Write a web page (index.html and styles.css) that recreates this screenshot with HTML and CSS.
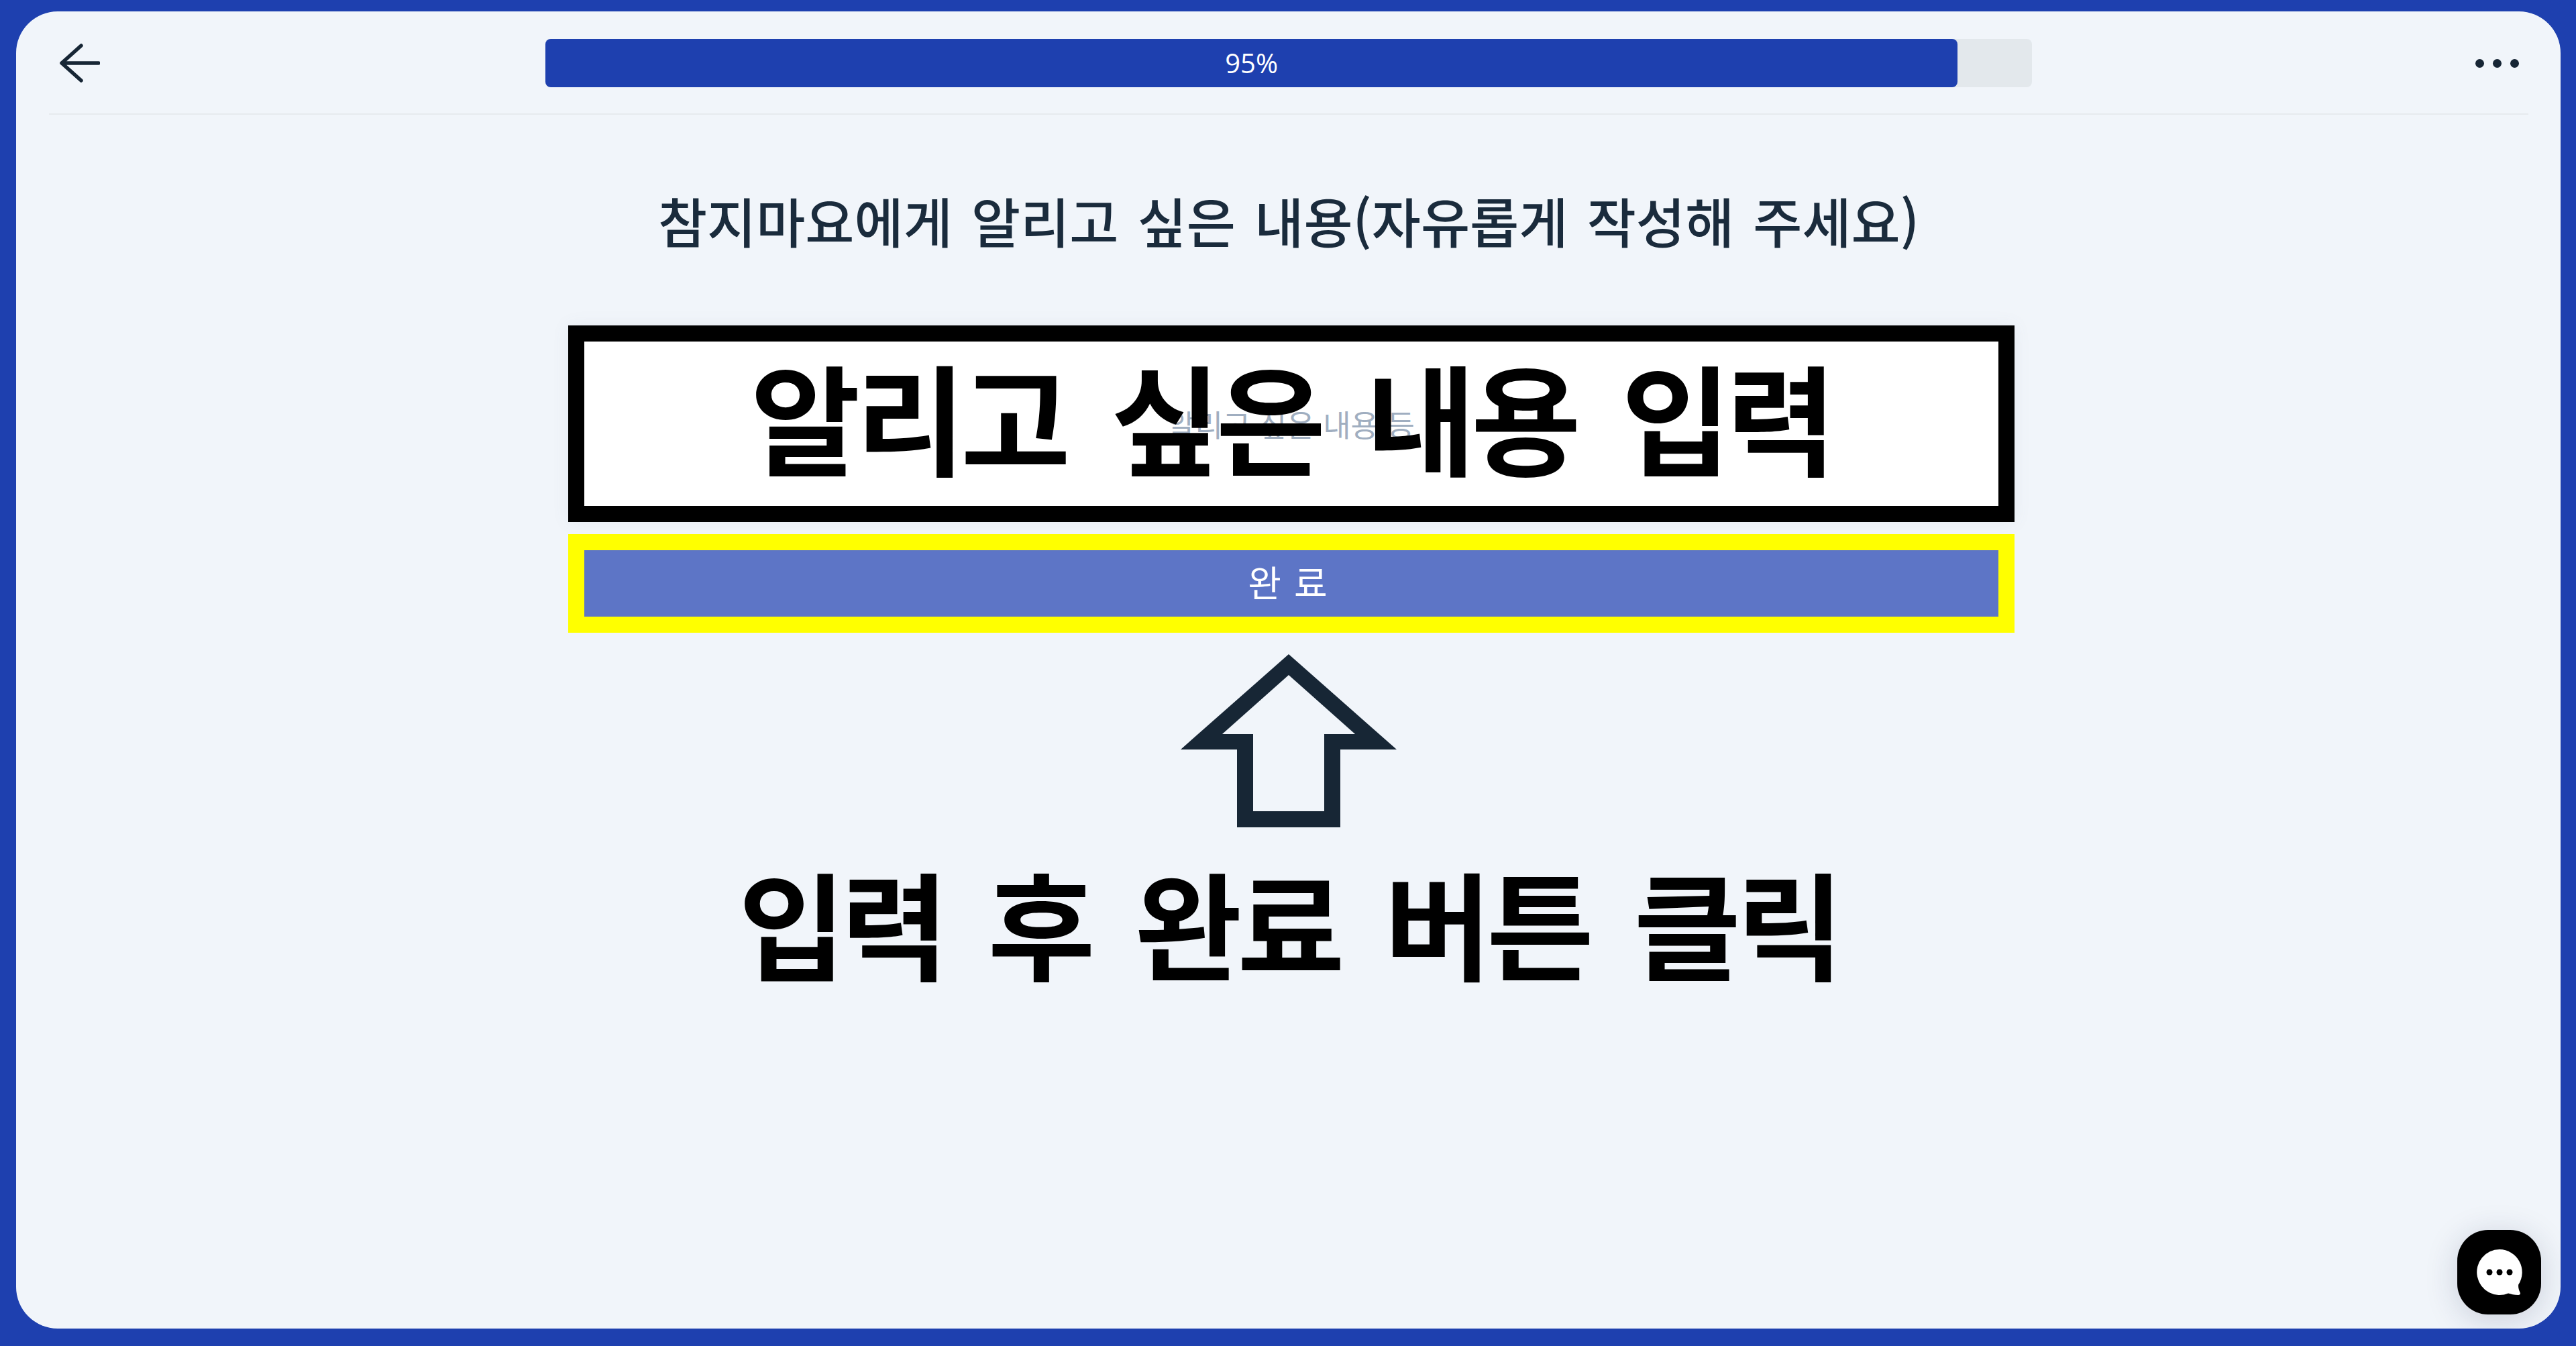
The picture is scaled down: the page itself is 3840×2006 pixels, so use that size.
FILE: index.html
```html
<!DOCTYPE html>
<html lang="ko">
<head>
<meta charset="utf-8">
<title>참지마요</title>
<link rel="stylesheet" href="styles.css">
</head>
<body>
<div class="panel">
  <header class="topbar">
    <button class="icon-btn back" aria-label="뒤로">
      <svg class="back-icon" viewBox="0 0 60 58"><path d="M32 3 3 29 32 55M3 29h55" /></svg>
    </button>
    <div class="progress">
      <div class="progress-fill" style="width:95%">95%</div>
    </div>
    <button class="icon-btn more" aria-label="더보기">
      <span class="dot"></span><span class="dot"></span><span class="dot"></span>
    </button>
  </header>
  <main class="content">
    <h1 class="question">참지마요에게 알리고 싶은 내용(자유롭게 작성해 주세요)</h1>
    <div class="answer">
      <span class="placeholder">알리고 싶은 내용 등</span>
      <span class="answer-note">알리고 싶은 내용 입력</span>
    </div>
    <div class="submit-frame">
      <button class="submit">완 료</button>
    </div>
    <svg class="up-arrow" viewBox="0 0 322 258"><path fill-rule="evenodd" d="M161 0 322 142H238V258H84V142H0ZM161 31 62 119H108V234H214V119H260Z"/></svg>
    <p class="hint">입력 후 완료 버튼 클릭</p>
  </main>
  <button class="chat" aria-label="채팅">
    <svg class="chat-icon" viewBox="0 0 70 70"><path class="bubble" d="M35 1a34 34 0 1 0 13 65.500c4 1 9 2.500 15 2.500 3 0 3.500-2 2.500-4-2-4-2.800-8-2.300-11.500A34 34 0 0 0 35 1Z"/><circle class="bubble-dot" cx="20" cy="35" r="4.500"/><circle class="bubble-dot" cx="35" cy="35" r="4.500"/><circle class="bubble-dot" cx="50" cy="35" r="4.500"/></svg>
  </button>
</div>
</body>
</html>
```
FILE: styles.css
```css
* { box-sizing: border-box; }
html, body { margin: 0; height: 100%; }
body {
  background: #1e40af;
  padding: 17px 23px 26px 24px;
  font-family: "Noto Sans CJK KR", "Noto Sans", sans-serif;
}
.panel {
  position: relative;
  height: 100%;
  background: #f1f5fa;
  border-radius: 62px;
  overflow: hidden;
  padding: 0 48px 0 49px;
  display: flex;
  flex-direction: column;
}
.topbar {
  height: 154px;
  flex: none;
  border-bottom: 2px solid #e6eaee;
  display: flex;
  align-items: center;
  justify-content: space-between;
  padding-top: 2px;
}
.icon-btn {
  width: 100px;
  height: 72px;
  background: none;
  border: 0;
  padding: 0;
  display: flex;
  align-items: center;
}
.back { padding-left: 16px; }
.back-icon {
  width: 60px;
  height: 58px;
  fill: none;
  stroke: #172635;
  stroke-width: 5.500;
  stroke-linecap: round;
  stroke-linejoin: round;
}
.more { justify-content: flex-end; gap: 13px; padding-right: 14px; }
.dot { width: 13px; height: 13px; border-radius: 50%; background: #172635; }
.progress {
  width: 2216px;
  height: 72px;
  background: #e3e8ec;
  border-radius: 8px;
}
.progress-fill {
  height: 100%;
  background: #1e40af;
  border-radius: 8px;
  color: #fff;
  font: 400 40px/72px "Open Sans", sans-serif;
  text-align: center;
}
.content {
  flex: 1;
  display: flex;
  flex-direction: column;
  align-items: center;
}
.question {
  margin: 98px 0 0;
  color: #1a2b3c;
  font-size: 79.5px;
  font-weight: 500;
  line-height: 118px;
  word-spacing: 6px;
  white-space: nowrap;
}
.answer {
  position: relative;
  width: 2156px;
  height: 293px;
  margin: 98px 0 0 7px;
  background: #fff;
  border: 24px solid #000;
  display: flex;
  align-items: center;
  justify-content: center;
  box-shadow: 0 0 24px rgba(100, 116, 139, .08);
}
.placeholder { color: #a0aec0; font-size: 45px; line-height: 1; }
.answer-note {
  position: absolute;
  left: 0;
  right: 0;
  top: -26px;
  bottom: 0;
  display: flex;
  align-items: center;
  justify-content: center;
  color: #000;
  font-size: 178px;
  font-weight: 700;
  letter-spacing: -7px;
  word-spacing: 24px;
  white-space: nowrap;
}
.submit-frame {
  width: 2156px;
  height: 147px;
  margin: 18px 0 0 7px;
  border: 24px solid #ff0;
}
.submit {
  display: block;
  width: 100%;
  height: 100%;
  border: 0;
  padding: 0 8px 6px 0;
  background: #5d75c6;
  color: #fff;
  font-family: inherit;
  font-size: 54px;
  letter-spacing: 2px;
}
.up-arrow {
  display: block;
  width: 322px;
  height: 258px;
  margin-top: 32px;
  fill: #172635;
}
.hint {
  margin: 26px 0 0;
  color: #000;
  font-size: 174px;
  font-weight: 700;
  line-height: 1.3;
  letter-spacing: -7px;
  word-spacing: 24px;
  white-space: nowrap;
}
.chat {
  position: absolute;
  right: 29px;
  bottom: 21px;
  width: 125px;
  height: 126px;
  border: 0;
  padding: 0;
  border-radius: 46px;
  background: #000;
  box-shadow: 0 8px 48px rgba(30, 41, 80, .18);
  display: flex;
  align-items: center;
  justify-content: center;
}
.chat-icon { width: 70px; height: 70px; }
.bubble { fill: #fff; }
.bubble-dot { fill: #000; }
```
